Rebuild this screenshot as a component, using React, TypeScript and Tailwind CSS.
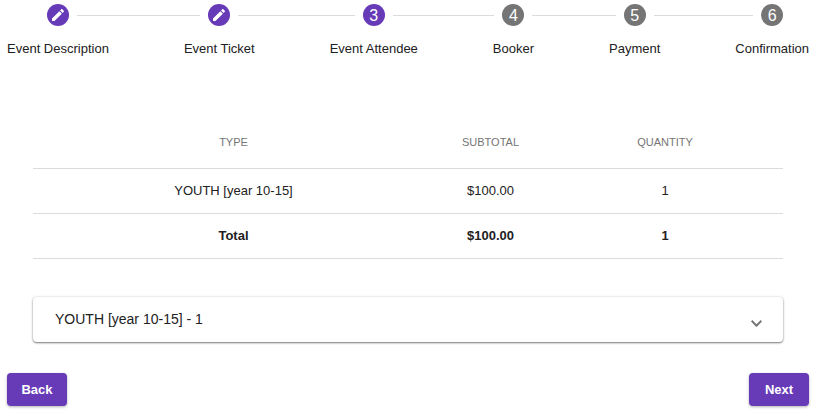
import React from "react";
import clsx from "clsx";

interface Step {
    label: string;
    state: "done" | "current" | "upcoming";
}

const steps: Step[] = [
    { label: "Event Description", state: "done" },
    { label: "Event Ticket", state: "done" },
    { label: "Event Attendee", state: "current" },
    { label: "Booker", state: "upcoming" },
    { label: "Payment", state: "upcoming" },
    { label: "Confirmation", state: "upcoming" },
];

const rows = [{ type: "YOUTH [year 10-15]", subtotal: "$100.00", quantity: 1 }];

const PencilIcon = () => (
    <svg viewBox="0 0 24 24" className="size-4" fill="currentColor" aria-hidden="true">
        <path d="M3 17.25V21h3.75L17.81 9.94l-3.75-3.75L3 17.25zM20.71 7.04c.39-.39.39-1.02 0-1.41l-2.34-2.34c-.39-.39-1.02-.39-1.41 0l-1.83 1.83 3.75 3.75 1.83-1.83z" />
    </svg>
);

const Line: React.FC<{ hidden?: boolean }> = ({ hidden }) => (
    <span className={clsx("h-px flex-1", !hidden && "bg-[#dcdcdc]")} />
);

// The connector runs through the step: beside the label and on both sides of the circle
const StepItem: React.FC<{ step: Step; index: number }> = ({ step, index }) => {
    const first = index === 0;
    const last = index === steps.length - 1;

    return (
        <li
            className={clsx("flex", first || last ? "flex-[1_1_auto]" : "flex-[2_1_auto]")}
            aria-current={step.state === "current" ? "step" : undefined}
        >
            {!first && (
                <div className="flex h-[22px] flex-1 items-center">
                    <Line />
                </div>
            )}
            <div className="flex flex-col">
                <div className="flex items-center gap-2">
                    <Line hidden={first} />
                    <span
                        className={clsx(
                            "flex size-[22px] items-center justify-center rounded-full text-base leading-none text-white",
                            step.state === "upcoming" ? "bg-[#757575]" : "bg-[#673ab7]"
                        )}
                    >
                        {step.state === "done" ? <PencilIcon /> : <span className="pt-0.5">{index + 1}</span>}
                    </span>
                    <Line hidden={last} />
                </div>
                <span className="mt-[13px] text-[13px] leading-5 whitespace-nowrap">{step.label}</span>
            </div>
            {!last && (
                <div className="flex h-[22px] flex-1 items-center">
                    <Line />
                </div>
            )}
        </li>
    );
};

const TicketTable = () => (
    <table className="w-full table-fixed border-collapse text-center text-[13px]">
        <thead>
            <tr className="h-[53px] border-b border-[#dcdcdc] text-[11px] text-[#757575]">
                <th className="w-[50%] pt-0.5 pl-[26px] font-normal">TYPE</th>
                <th className="w-[22%] pt-0.5 font-normal">SUBTOTAL</th>
                <th className="w-[28%] pt-0.5 pr-[26px] font-normal">QUANTITY</th>
            </tr>
        </thead>
        <tbody>
            {rows.map((row) => (
                <tr key={row.type} className="h-[45px] border-b border-[#dcdcdc]">
                    <td className="pl-[26px]">{row.type}</td>
                    <td>{row.subtotal}</td>
                    <td className="pr-[26px]">{row.quantity}</td>
                </tr>
            ))}
        </tbody>
        <tfoot>
            <tr className="h-[45px] border-b border-[#dcdcdc] font-bold">
                <td className="pl-[26px]">Total</td>
                <td>$100.00</td>
                <td className="pr-[26px]">1</td>
            </tr>
        </tfoot>
    </table>
);

const NavButton: React.FC<{ children: React.ReactNode }> = ({ children }) => (
    <button
        type="button"
        className="h-[33px] w-[60px] rounded bg-[#673ab7] pt-0.5 text-[13px] font-bold text-white shadow-[0_1px_3px_rgba(0,0,0,0.3)]"
    >
        {children}
    </button>
);

export default function App() {
    return (
        <main className="bg-white pt-1 pr-[5px] pb-1 pl-[7px] font-['Liberation_Sans',Arial,sans-serif] text-[#212121]">
            <ol className="flex">
                {steps.map((step, index) => (
                    <StepItem key={step.label} step={step} index={index} />
                ))}
            </ol>

            <section className="mt-14 px-[26px]">
                <TicketTable />
                <button
                    type="button"
                    aria-expanded="false"
                    className="mt-[38px] flex h-[45px] w-full items-center justify-between rounded bg-white pr-[21px] pl-[22px] text-sm shadow-[0_1px_2px_rgba(0,0,0,0.5),0_0_3px_rgba(0,0,0,0.12)]"
                >
                    <span>YOUTH [year 10-15] - 1</span>
                    <svg
                        viewBox="0 0 11 7"
                        className="mt-2 h-[7px] w-[11px] text-[#757575]"
                        fill="none"
                        stroke="currentColor"
                        strokeWidth="2"
                        aria-hidden="true"
                    >
                        <path d="M.6 .8l4.9 4.9L10.4 .8" />
                    </svg>
                </button>
            </section>

            <div className="mt-[31px] flex justify-between">
                <NavButton>Back</NavButton>
                <NavButton>Next</NavButton>
            </div>
        </main>
    );
}
